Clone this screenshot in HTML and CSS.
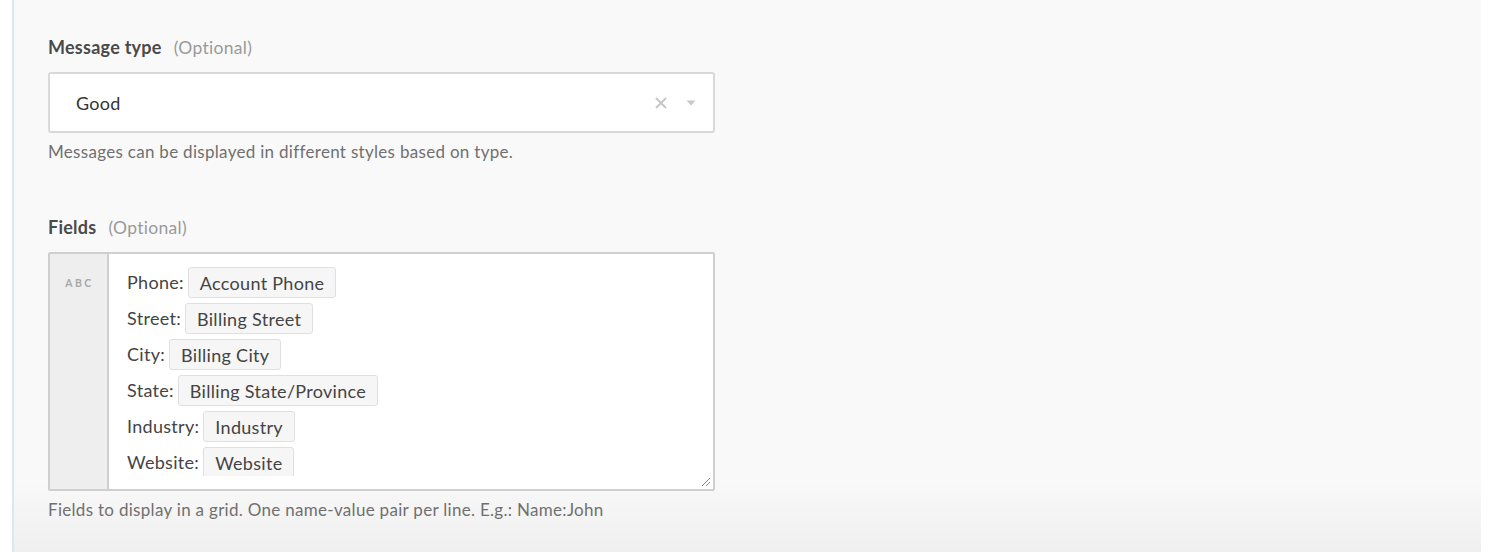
FILE: index.html
```html
<!DOCTYPE html>
<html>
<head>
<meta charset="utf-8">
<link rel="stylesheet" href="styles.css">
</head>
<body>
<div class="panel">
  <div class="label"><span class="name">Message type</span><span class="opt">(Optional)</span></div>
  <div class="select">
    <span class="value">Good</span>
    <span class="controls">
      <svg class="clear" width="14" height="14" viewBox="0 0 14 14"><path d="M2 2 L12 12 M12 2 L2 12" stroke="#c8c8c8" stroke-width="2" fill="none"/></svg>
      <svg class="caret" width="10" height="6" viewBox="0 0 10 6"><path d="M0.5 0.5 L9.5 0.5 L5 5.5 Z" fill="#c8c8c8"/></svg>
    </span>
  </div>
  <div class="help">Messages can be displayed in different styles based on type.</div>

  <div class="label fields-label"><span class="name">Fields</span><span class="opt">(Optional)</span></div>
  <div class="textarea">
    <div class="gutter">ABC</div>
    <div class="content">
      <div class="rows">
        <div class="row"><span class="key">Phone:</span><span class="pill">Account Phone</span></div>
        <div class="row"><span class="key">Street:</span><span class="pill">Billing Street</span></div>
        <div class="row"><span class="key">City:</span><span class="pill">Billing City</span></div>
        <div class="row"><span class="key">State:</span><span class="pill">Billing State/Province</span></div>
        <div class="row"><span class="key">Industry:</span><span class="pill">Industry</span></div>
        <div class="row"><span class="key">Website:</span><span class="pill">Website</span></div>
      </div>
      <svg class="resize" width="10" height="10" viewBox="0 0 10 10"><path d="M1 9 L9 1 M5 9 L9 5" stroke="#888" stroke-width="1" fill="none"/></svg>
    </div>
  </div>
  <div class="help">Fields to display in a grid. One name-value pair per line. E.g.: Name:John</div>
</div>
</body>
</html>
```
FILE: styles.css
```css
html, body {
  margin: 0;
  padding: 0;
  background: #ffffff;
  font-family: Lato, "Open Sans", sans-serif;
}
.panel {
  margin-left: 12px;
  width: 1469px;
  height: 552px;
  box-sizing: border-box;
  border-left: 2px solid #d6ecea;
  background: linear-gradient(to bottom, #f9f9f9 0, #f9f9f9 480px, #efefef 552px);
  padding: 37px 0 0 34px;
  letter-spacing: 0.3px;
}
.label {
  height: 20px;
  line-height: 20px;
  font-size: 18px;
  margin-bottom: 15px;
}
.label .name {
  font-weight: bold;
  color: #4a4a4a;
  letter-spacing: 0.25px;
}
.label .opt {
  color: #9a9a9a;
  margin-left: 12px;
  font-size: 17.5px;
}
.fields-label {
  margin-top: 55px;
}
.select {
  width: 667px;
  height: 61px;
  box-sizing: border-box;
  border: 2px solid #d9d9d9;
  border-radius: 3px;
  background: #ffffff;
  display: flex;
  align-items: center;
  padding-left: 26px;
  padding-right: 17px;
}
.select .value {
  flex: 1;
  font-size: 18px;
  color: #333;
}
.controls {
  display: flex;
  align-items: center;
  gap: 18px;
}
.clear { display: block; }
.caret { display: block; margin-top: 1px; }
.help {
  margin-top: 9px;
  height: 20px;
  line-height: 20px;
  font-size: 17px;
  color: #707070;
}
.textarea {
  width: 667px;
  height: 239px;
  box-sizing: border-box;
  border: 2px solid #cfcfcf;
  border-radius: 2px;
  background: #ffffff;
  display: flex;
}
.gutter {
  flex: none;
  width: 59px;
  box-sizing: border-box;
  background: #eeeeee;
  border-right: 2px solid #cfcfcf;
  font-size: 10.5px;
  font-weight: bold;
  letter-spacing: 2.4px;
  color: #a8a8a8;
  text-align: center;
  padding-top: 23px;
  padding-left: 2px;
}
.content {
  flex: 1;
  position: relative;
  padding: 10px 0 0 18px;
}
.rows {
  height: 212px;
  overflow: hidden;
}
.row {
  height: 36px;
  display: flex;
  align-items: center;
  font-size: 18px;
  color: #444;
}
.key {
  margin-right: 4px;
}
.pill {
  height: 31px;
  line-height: 31px;
  box-sizing: border-box;
  padding: 0 11px;
  background: #f6f6f6;
  border: 1px solid #e0e0e0;
  border-radius: 3px;
  color: #444;
}
.resize {
  position: absolute;
  right: 2px;
  bottom: 2px;
}
```
